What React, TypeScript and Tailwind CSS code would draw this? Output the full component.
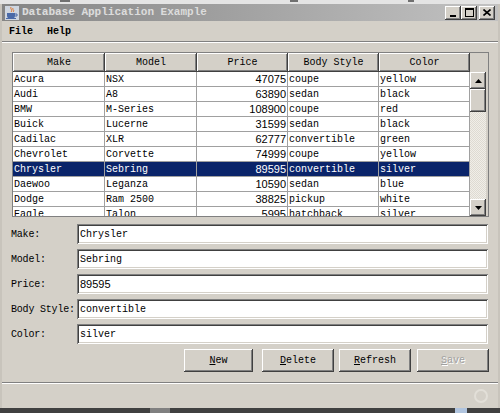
import React from "react";

const rows: [string, string, number, string, string][] = [
  ["Acura", "NSX", 47075, "coupe", "yellow"],
  ["Audi", "A8", 63890, "sedan", "black"],
  ["BMW", "M-Series", 108900, "coupe", "red"],
  ["Buick", "Lucerne", 31599, "sedan", "black"],
  ["Cadilac", "XLR", 62777, "convertible", "green"],
  ["Chevrolet", "Corvette", 74999, "coupe", "yellow"],
  ["Chrysler", "Sebring", 89595, "convertible", "silver"],
  ["Daewoo", "Leganza", 10590, "sedan", "blue"],
  ["Dodge", "Ram 2500", 38825, "pickup", "white"],
  ["Eagle", "Talon", 5995, "hatchback", "silver"],
];

const raised =
  "shadow-[inset_-1px_-1px_#404040,inset_1px_1px_#ffffff,inset_-2px_-2px_#808080,inset_2px_2px_#d4d0c8]";
const sunken =
  "shadow-[inset_1px_1px_#808080,inset_-1px_-1px_#ffffff,inset_2px_2px_#404040,inset_-2px_-2px_#d4d0c8]";

const mono = "font-['Liberation_Mono',monospace]";

function TitleButton({ children }: { children: React.ReactNode }) {
  return (
    <div className={`flex h-[14px] w-[16px] items-center justify-center bg-[#d4d0c8] ${raised}`}>
      {children}
    </div>
  );
}

function Field({ label, value, sans }: { label: string; value: string; sans?: boolean }) {
  return (
    <div className="flex h-[20px] items-center">
      <div className={`w-[67px] whitespace-nowrap pl-[1px] text-[10px] tracking-[-0.2px] text-black ${mono}`}>
        {label}
      </div>
      <div className={`flex h-[20px] flex-1 items-center bg-white pl-[3px] ${sunken}`}>
        <span
          className={
            sans
              ? "font-['Liberation_Sans',sans-serif] text-[11px] text-black"
              : `text-[10px] text-black ${mono}`
          }
        >
          {value}
        </span>
      </div>
    </div>
  );
}

function Btn({ first, rest, disabled }: { first: string; rest: string; disabled?: boolean }) {
  return (
    <div
      className={`flex h-[23px] items-center justify-center bg-[#d4d0c8] text-[10px] ${mono} ${raised} ${
        disabled ? "text-[#a0a0a0] [text-shadow:1px_1px_#ffffff]" : "text-black"
      }`}
    >
      <span className="underline">{first}</span>
      {rest}
    </div>
  );
}

export default function App() {
  const cols = ["Make", "Model", "Price", "Body Style", "Color"];
  const widths = ["w-[92px]", "w-[92px]", "w-[91px]", "w-[91px]", "w-[91px]"];

  return (
    <div className="flex h-[413px] w-[500px] flex-col overflow-hidden bg-[#d4d0c8]">
      {/* desktop strip behind the window */}
      <div className="flex h-[4px] bg-[#e4e4e4]">
        <div className="ml-[60px] h-[2px] w-[10px] bg-[#707070]" />
        <div className="ml-[220px] h-[2px] w-[8px] bg-[#707070]" />
        <div className="ml-[110px] h-[2px] w-[6px] bg-[#707070]" />
      </div>

      <div className="flex h-[404px] flex-col border-x-2 border-[#c8c4bc]">
        {/* title bar */}
        <div className="flex h-[17px] items-center bg-gradient-to-r from-[#858585] to-[#c2c2c2] pl-[3px] pr-[3px]">
          <svg width="14" height="14" viewBox="0 0 14 14" className="mr-[3px]">
            <rect x="0" y="0" width="14" height="14" fill="#cfd6e0" />
            <path d="M6 1c-1 2 2 3 0 5M8 2c-1 2 2 2 0 4" stroke="#e07020" strokeWidth="1" fill="none" />
            <path d="M2 7h8v3c0 2-2 3-4 3s-4-1-4-3z" fill="#4a6aa8" />
            <path d="M10 8h2v2h-2" stroke="#4a6aa8" strokeWidth="1" fill="none" />
            <rect x="1" y="12" width="10" height="1" fill="#4a6aa8" />
          </svg>
          <span className={`text-[11px] font-bold text-[#dcdcdc] ${mono} [text-shadow:1px_0_#9a9a9a]`}>
            Database Application Example
          </span>
          <div className="ml-auto flex items-center">
            <TitleButton>
              <div className="mt-[6px] h-[2px] w-[6px] bg-black" />
            </TitleButton>
            <TitleButton>
              <div className="h-[9px] w-[9px] border border-t-2 border-black" />
            </TitleButton>
            <div className="w-[2px]" />
            <TitleButton>
              <svg width="8" height="7" viewBox="0 0 8 7">
                <path d="M0.5 0.5L7.5 6.5M7.5 0.5L0.5 6.5" stroke="#000" strokeWidth="1.6" />
              </svg>
            </TitleButton>
          </div>
        </div>

        {/* menu bar */}
        <div className={`flex h-[20px] items-center gap-[14px] pl-[7px] text-[10px] font-bold text-black ${mono}`}>
          <span>File</span>
          <span>Help</span>
        </div>
        <div className="h-[1px] bg-[#808080]" />
        <div className="h-[1px] bg-white" />

        {/* table */}
        <div className="mt-[9px] ml-[10px] mr-[9px] flex h-[165px] flex-col border border-[#808080] bg-[#d4d0c8]">
          <div className="flex h-[19px]">
            {cols.map((c, i) => (
              <div
                key={c}
                className={`${widths[i]} flex items-center justify-center bg-[#d4d0c8] text-[10px] text-black ${mono} ${raised}`}
              >
                {c}
              </div>
            ))}
            <div className="flex-1 bg-[#d4d0c8]" />
          </div>
          <div className="flex h-[144px]">
            <div className="flex w-[457px] flex-col overflow-hidden bg-white">
              {rows.map((r, ri) => {
                const sel = ri === 6;
                return (
                  <div
                    key={r[0]}
                    className={`flex h-[15px] shrink-0 ${sel ? "bg-[#0a246a] text-white" : "text-black"}`}
                  >
                    {r.map((v, ci) => (
                      <div
                        key={ci}
                        className={`${widths[ci]} flex h-[15px] items-center border-b border-r border-[#a0a0a0] ${
                          ci === 2
                            ? "justify-end pr-[1px] font-['Liberation_Sans',sans-serif] text-[11px]"
                            : `pl-[1px] text-[10px] ${mono}`
                        }`}
                      >
                        {v}
                      </div>
                    ))}
                  </div>
                );
              })}
            </div>
            {/* scrollbar */}
            <div className="flex w-[16px] flex-col bg-[repeating-conic-gradient(#f0eee8_0_25%,#dedad2_0_50%)] bg-[length:2px_2px]">
              <div className={`flex h-[17px] items-center justify-center bg-[#d4d0c8] ${raised}`}>
                <svg width="7" height="4" viewBox="0 0 7 4">
                  <path d="M3.5 0L7 4H0z" fill="#000" />
                </svg>
              </div>
              <div className={`h-[23px] bg-[#d4d0c8] ${raised}`} />
              <div className="flex-1" />
              <div className={`flex h-[17px] items-center justify-center bg-[#d4d0c8] ${raised}`}>
                <svg width="7" height="4" viewBox="0 0 7 4">
                  <path d="M0 0H7L3.5 4z" fill="#000" />
                </svg>
              </div>
            </div>
          </div>
        </div>

        {/* form */}
        <div className="mt-[7px] ml-[8px] mr-[10px] flex flex-col gap-[5px]">
          <Field label="Make:" value="Chrysler" />
          <Field label="Model:" value="Sebring" />
          <Field label="Price:" value="89595" sans />
          <Field label="Body Style:" value="convertible" />
          <Field label="Color:" value="silver" />
        </div>

        {/* buttons */}
        <div className="mt-[5px] mr-[9px] flex justify-end">
          <div className="w-[69px]"><Btn first="N" rest="ew" /></div>
          <div className="ml-[9px] w-[72px]"><Btn first="D" rest="elete" /></div>
          <div className="ml-[5px] w-[72px]"><Btn first="R" rest="efresh" /></div>
          <div className="ml-[6px] w-[72px]"><Btn first="S" rest="ave" disabled /></div>
        </div>

        <div className="mt-[10px] h-[1px] bg-[#808080]" />
        <div className="h-[1px] bg-white" />
        <div className="flex flex-1 items-center justify-end pr-[10px]">
          <div className="h-[14px] w-[14px] rounded-full border-2 border-[#e2dfd8]" />
        </div>
      </div>

      <div className="flex h-[5px] bg-[#404040]">
        <div className="ml-[150px] h-[5px] w-[20px] bg-[#808080]" />
        <div className="ml-[285px] h-[5px] w-[12px] bg-[#b0c4de]" />
      </div>
    </div>
  );
}
